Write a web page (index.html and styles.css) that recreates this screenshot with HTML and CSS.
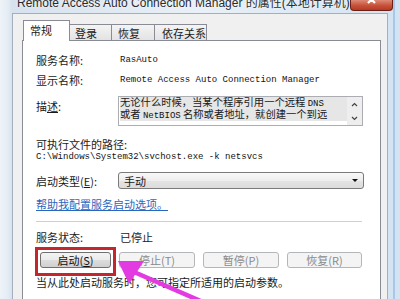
FILE: index.html
```html
<!DOCTYPE html>
<html>
<head>
<meta charset="utf-8">
<link rel="stylesheet" href="styles.css">
</head>
<body>
<div class="window">
  <div class="titlebar">
    <span class="title">Remote Access Auto Connection Manager 的属性(本地计算机)</span>
    <span class="close"><svg width="41" height="10" viewBox="0 0 41 10"><path d="M17 -4 L24 3 M24 -4 L17 3" stroke="#fff" stroke-width="2.2"/></svg></span>
  </div>
  <div class="dialog">
    <div class="tabs">
      <div class="tab active">常规</div>
      <div class="tab t2">登录</div>
      <div class="tab t3">恢复</div>
      <div class="tab t4">依存关系</div>
    </div>
    <div class="panel">
      <div class="row r1"><span class="label">服务名称:</span><span class="mono">RasAuto</span></div>
      <div class="row r2"><span class="label">显示名称:</span><span class="mono">Remote Access Auto Connection Manager</span></div>
      <div class="desc-row">
        <span class="label desc-label">描<u>述</u>:</span>
        <div class="desc">
          <div class="desc-text">
            <div class="line">无论什么时候，当某个程序引用一个远程 <span class="mono">DNS</span></div>
            <div class="line">或者 <span class="mono">NetBIOS</span> 名称或者地址，就创建一个到远</div>
          </div>
          <div class="scroll">
            <svg width="7" height="5" viewBox="0 0 7 5"><path d="M1 4 L3.5 1.5 L6 4" fill="none" stroke="#444" stroke-width="1.2"/></svg>
            <svg width="7" height="5" viewBox="0 0 7 5"><path d="M1 1 L3.5 3.5 L6 1" fill="none" stroke="#444" stroke-width="1.2"/></svg>
          </div>
        </div>
      </div>
      <div class="plain path-label">可执行文件的路径:</div>
      <div class="path mono">C:\Windows\System32\svchost.exe -k netsvcs</div>
      <div class="type-row">
        <span class="label">启动类型(<u>E</u>):</span>
        <div class="combo"><span class="combo-text">手动</span><span class="caret"></span></div>
      </div>
      <div class="plain link">帮助我配置服务启动选项。</div>
      <div class="sep"></div>
      <div class="row status"><span class="label">服务状态:</span><span>已停止</span></div>
      <div class="buttons">
        <div class="btn start">启动(<u>S</u>)</div>
        <div class="btn disabled w2">停止(T)</div>
        <div class="btn disabled w3">暂停(P)</div>
        <div class="btn disabled w4">恢复(R)</div>
      </div>
      <div class="plain note">当从此处启动服务时，您可指定所适用的启动参数。</div>
    </div>
  </div>
  <svg class="arrow" width="400" height="299" viewBox="0 0 400 299">
    <path d="M134 272 L212 306" stroke="#e23be2" stroke-width="4.5" fill="none"/>
    <polygon points="118,261 144,261 129,284" fill="#e23be2"/>
  </svg>
</div>
</body>
</html>
```

FILE: styles.css
```css
html, body {
  margin: 0;
  padding: 0;
}
body {
  width: 400px;
  height: 299px;
  overflow: hidden;
  font-family: "Noto Sans CJK SC", sans-serif;
  color: #1a1a1a;
}
.window {
  position: relative;
  width: 400px;
  height: 299px;
  overflow: hidden;
  display: flex;
  flex-direction: column;
  background:
    linear-gradient(90deg, transparent 393px, #a9c8e8 393px, #a9c8e8 395px, transparent 395px),
    linear-gradient(90deg, #eef3f8 0, #e4ecf5 8px, #d6e2ee 12px, #e9f0f7 50%, #d3e3f2 100%);
}
.titlebar {
  flex: none;
  height: 13px;
  display: flex;
  align-items: flex-start;
}
.title {
  margin: -3px 0 0 17px;
  font: 12px/12px "Liberation Sans", "Noto Sans CJK SC", sans-serif;
  color: #2b2b2b;
  white-space: nowrap;
  text-shadow: 0 0 3px #fff;
}
.close {
  margin-left: auto;
  margin-right: 11px;
  width: 43px;
  height: 11px;
  box-sizing: border-box;
  border: 1px solid #6a2016;
  border-top: none;
  border-radius: 0 0 4px 4px;
  background: linear-gradient(#dc8a77, #c8513a 55%, #b53a24);
  display: flex;
}
.dialog {
  flex: 1;
  min-height: 0;
  margin: 0 12px;
  background: #f0f0f0;
  border: 1px solid #a3afbd;
  border-bottom: none;
  display: flex;
  flex-direction: column;
}
.tabs {
  flex: none;
  height: 26px;
  box-sizing: border-box;
  padding-left: 10px;
  display: flex;
  align-items: flex-end;
}
.tab {
  height: 16px;
  box-sizing: border-box;
  border: 1px solid #898c95;
  border-bottom: none;
  background: linear-gradient(#f4f4f4, #e3e3e3);
  font-size: 11px;
  line-height: 14px;
  padding-top: 1px;
  white-space: nowrap;
  overflow: hidden;
}
.tab.active {
  position: relative;
  z-index: 1;
  width: 47px;
  height: 21px;
  margin-bottom: -1px;
  padding: 2px 0 0 6px;
  background: #fff;
}
.tab.t2 {
  width: 42px;
  border-left: none;
  padding-left: 5px;
}
.tab.t3 {
  width: 43px;
  border-left: none;
  padding-left: 6px;
}
.tab.t4 {
  width: 52px;
  border-left: none;
  padding-left: 7px;
}
.panel {
  flex: 1;
  margin: 0 6px 0 9px;
  background: #fff;
  border: 1px solid #898c95;
  border-bottom: none;
  padding-left: 13px;
  font-size: 11px;
}
.row {
  display: grid;
  grid-template-columns: 84px auto;
  align-items: center;
  height: 14px;
  line-height: 14px;
  white-space: nowrap;
}
.r1 { margin-top: 12px; }
.r2 { margin-top: 6px; }
.mono {
  font-family: "Liberation Mono", monospace;
  font-size: 9px;
  color: #111;
}
.desc-row {
  margin-top: 9px;
  display: grid;
  grid-template-columns: 82px 245px;
}
.desc-label {
  padding-top: 3px;
  line-height: 14px;
}
.desc {
  height: 30px;
  box-sizing: border-box;
  border: 1px solid #abadb3;
  background: #fff;
  display: flex;
}
.desc-text {
  flex: 1;
  min-width: 0;
  padding-left: 1px;
  overflow: hidden;
}
.line {
  line-height: 10px;
  white-space: nowrap;
  background: #e6e6e6;
  font-size: 10.3px;
}
.scroll {
  width: 15px;
  background: #eeeeee;
  display: flex;
  flex-direction: column;
  justify-content: space-between;
  align-items: center;
  padding: 5px 0 4px;
  box-sizing: border-box;
}
.scroll svg {
  display: block;
}
.plain {
  height: 14px;
  line-height: 14px;
  white-space: nowrap;
}
.path-label { margin-top: 11px; }
.path {
  height: 12px;
  line-height: 12px;
  white-space: nowrap;
}
.type-row {
  margin-top: 9px;
  display: grid;
  grid-template-columns: 82px 246px;
  align-items: center;
}
.combo {
  height: 17px;
  box-sizing: border-box;
  border: 1px solid #7a7a7a;
  border-radius: 3px;
  background: linear-gradient(#f8f8f8, #eeeeee 50%, #e4e4e4 51%, #dcdcdc);
  display: flex;
  align-items: center;
  padding-left: 5px;
  line-height: 14px;
}
.combo-text {
  flex: 1;
}
.caret {
  width: 0;
  height: 0;
  border-left: 3px solid transparent;
  border-right: 3px solid transparent;
  border-top: 3px solid #111;
  margin-right: 5px;
}
.link {
  margin-top: 8px;
  color: #2a66bd;
  text-decoration: underline;
}
.sep {
  margin-top: 10px;
  height: 1px;
  width: 326px;
  background: #cfcfcf;
}
.status { margin-top: 8px; }
.buttons {
  margin-top: 8px;
  padding-left: 4px;
  display: flex;
  gap: 8px;
}
.btn {
  position: relative;
  width: 71px;
  height: 16px;
  box-sizing: border-box;
  border: 1px solid #707070;
  border-radius: 3px;
  background: linear-gradient(#f3f3f3, #ebebeb 50%, #dddddd 51%, #d0d0d0);
  line-height: 14px;
  text-align: center;
  color: #111;
  white-space: nowrap;
}
.btn.disabled {
  border-color: #b4b7ba;
  background: #f4f4f4;
  color: #8a8a8a;
}
.btn.w2 { width: 76px; }
.btn.w3 { width: 76px; }
.btn.w4 { width: 75px; }
.btn.start::after {
  content: "";
  position: absolute;
  left: -6px;
  top: -6px;
  right: -6px;
  bottom: -9px;
  border: 3px solid #c3272e;
}
.note { margin-top: 7px; }
.arrow {
  position: absolute;
  left: 0;
  top: 0;
  pointer-events: none;
}
```
